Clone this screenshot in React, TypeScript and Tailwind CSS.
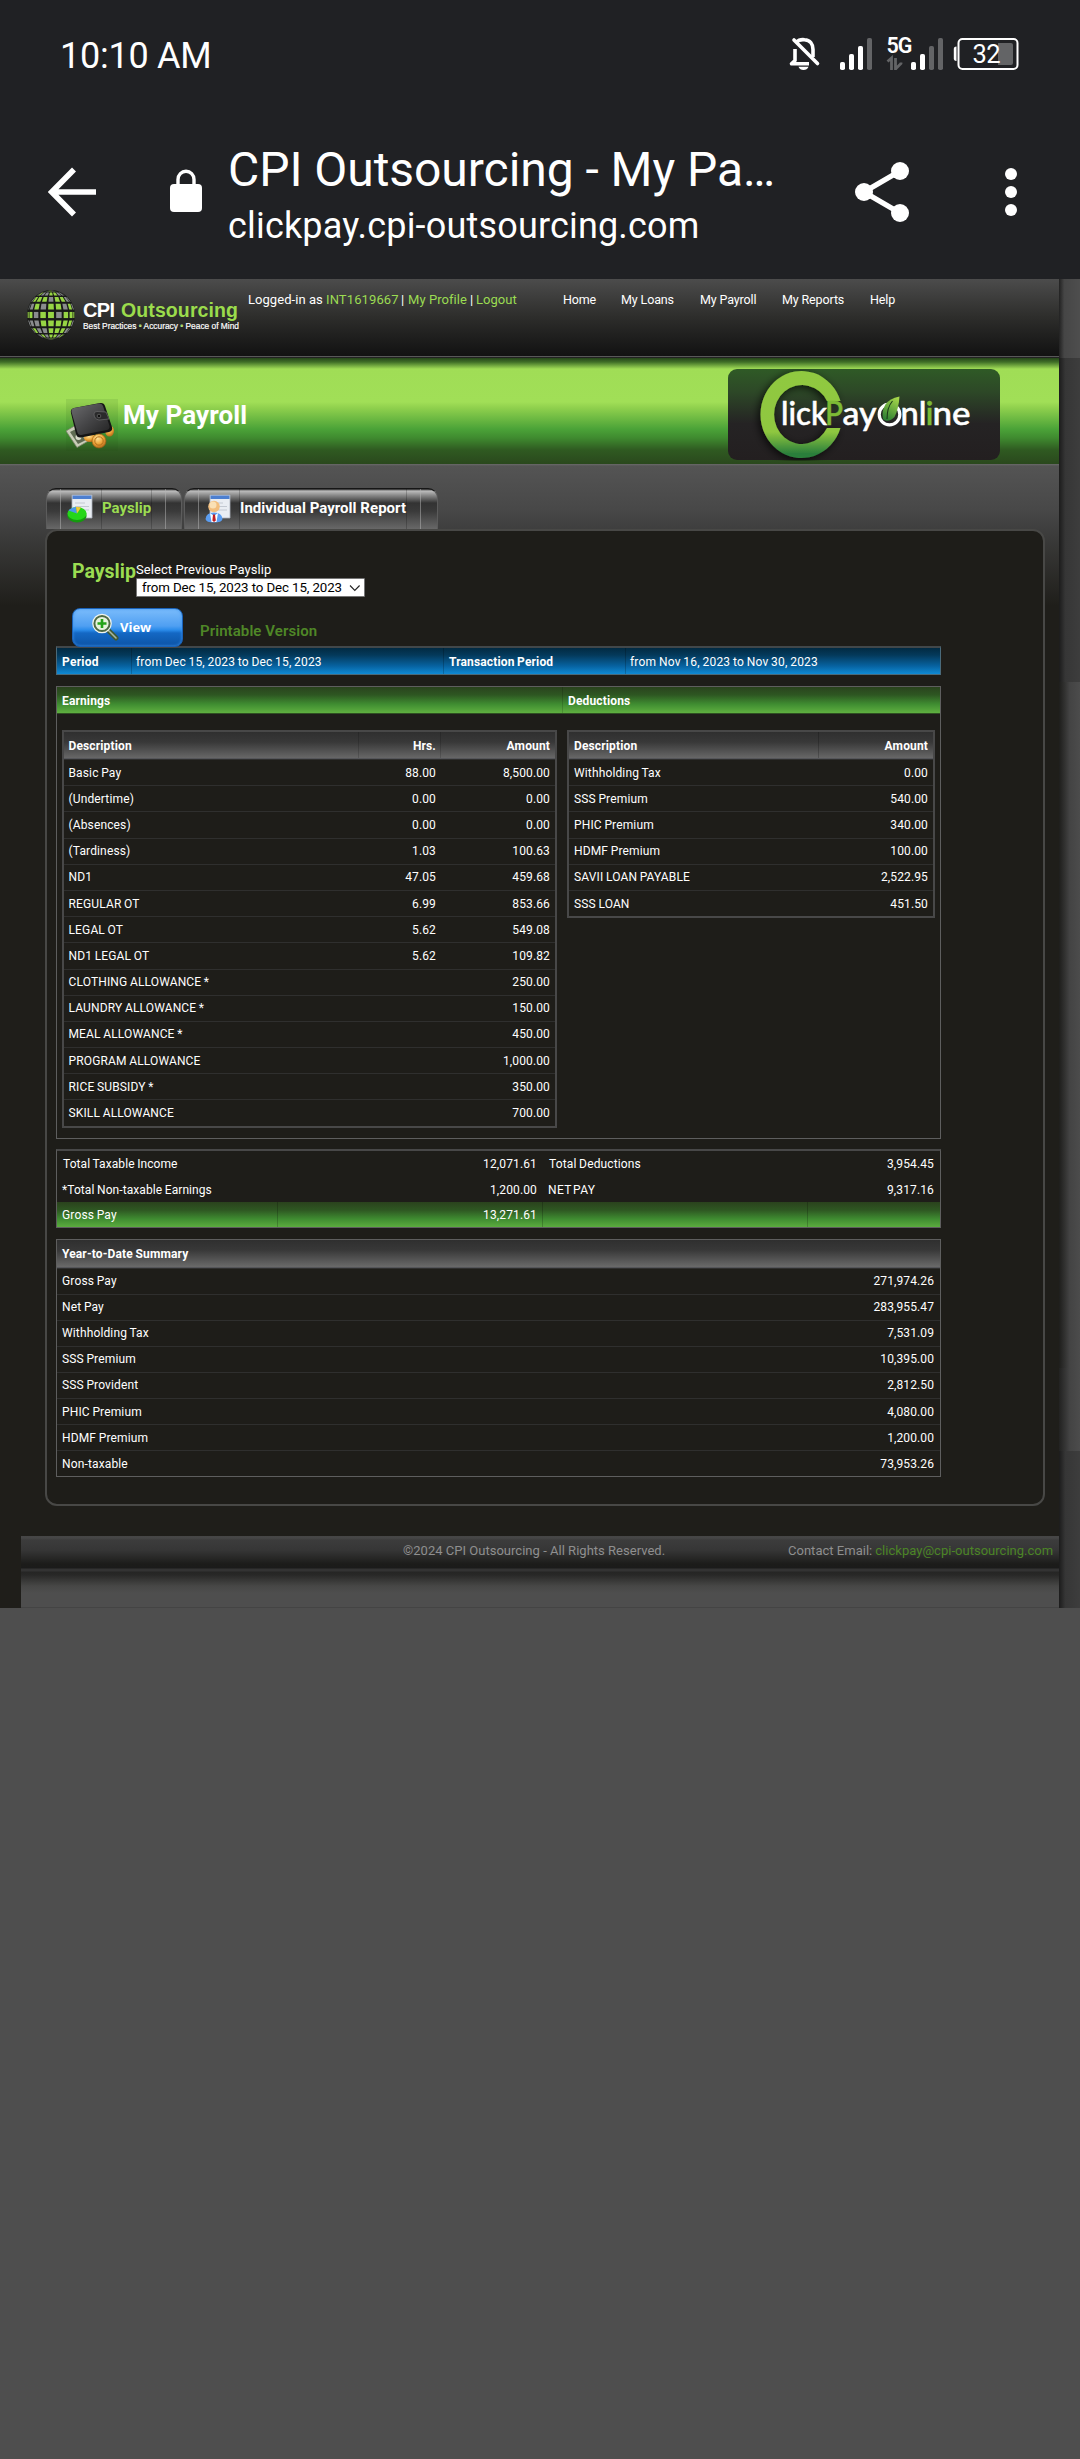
import React from "react";

type Cell = "g" | "w" | "n";

const GLOBE: string[] = [
  "nnwggwwnn",
  "wgwwggwwn",
  "wgggwggww",
  "nwgwggwgw",
  "ggwggwggg",
  "wwwgggggw",
  "wgwwgggww",
  "nwgwggwgn",
  "ngwwggwnn",
];

function Globe() {
  const R = 24.5;
  const cells: React.ReactElement[] = [];
  const n = 9;
  const rad = Math.PI / 180;
  for (let i = 0; i < n; i++) {
    for (let j = 0; j < n; j++) {
      const kind = GLOBE[i][j] as Cell;
      const la0 = (-90 + (180 / n) * i + 2.8) * rad;
      const la1 = (-90 + (180 / n) * (i + 1) - 2.8) * rad;
      const lo0 = (-90 + (180 / n) * j + 2.8) * rad;
      const lo1 = (-90 + (180 / n) * (j + 1) - 2.8) * rad;
      const p = (la: number, lo: number) =>
        `${(25 + R * Math.cos(la) * Math.sin(lo)).toFixed(2)},${(25 + R * Math.sin(la)).toFixed(2)}`;
      cells.push(
        <polygon
          key={`${i}-${j}`}
          points={[p(la0, lo0), p(la0, lo1), p(la1, lo1), p(la1, lo0)].join(" ")}
          fill={kind === "g" ? "#97d544" : kind === "w" ? "#8a8c8e" : "#55585a"}
        />
      );
    }
  }
  return (
    <svg width="48" height="50" viewBox="0 0 50 50" preserveAspectRatio="none">
      <circle cx="25" cy="25" r="25" fill="#191a18" />
      {cells}
    </svg>
  );
}

function StatusBar() {
  return (
    <div className="flex h-[108px] items-center text-white">
      <span className="ml-[60px] w-[728px] pt-[3px] text-[36px] leading-none tracking-[-0.25px]">10:10 AM</span>
      <svg width="232" height="54" viewBox="788 27 232 54" fill="none">
        <path d="M796 42.5C798 40.5 801 39.2 804.5 39.7C810 40 813 44 813 49.5V57M795 49V60.5L791.5 63.8H809" stroke="#fff" strokeWidth="3.6" strokeLinejoin="round" />
        <path d="M794 40L817.5 63.5" stroke="#fff" strokeWidth="3.6" strokeLinecap="round" />
        <path d="M798.5 66.8H808.5C807.5 69 806 70 803.5 70S799.5 69 798.5 66.8Z" fill="#fff" />
        <g fill="#fff">
          <rect x="840" y="62" width="5" height="8" rx="1.8" />
          <rect x="849" y="54" width="5" height="16" rx="1.8" />
          <rect x="858" y="46" width="5" height="24" rx="1.8" />
          <rect x="867" y="38" width="5" height="32" rx="1.8" fill="#636466" />
          <rect x="911" y="62" width="5" height="8" rx="1.8" />
          <rect x="920" y="54" width="5" height="16" rx="1.8" />
          <rect x="929" y="46" width="5" height="24" rx="1.8" fill="#636466" />
          <rect x="938" y="38" width="5" height="32" rx="1.8" fill="#636466" />
        </g>
        <text x="886.5" y="53" fontFamily="Roboto" fontSize="21.5" fontWeight="600" fill="#fff" textLength="26">5G</text>
        <path d="M887.5 61.5L891.5 58V70M895.5 58V70M895.5 69L901 63.5V62.5" stroke="#636466" strokeWidth="2.8" />
        <rect x="958.5" y="39" width="59" height="30" rx="4" stroke="#fff" strokeWidth="2" />
        <path d="M956.5 46.5C954.5 46.5 953.8 47.5 953.8 49V58.5C953.8 60 954.5 61 956.5 61Z" fill="#fff" />
        <path d="M998 43H1011Q1013 43 1013 45V63Q1013 65 1011 65H998Z" fill="#636466" />
        <text x="972.5" y="63" fontFamily="Roboto" fontSize="25.5" fill="#fff" textLength="28">32</text>
      </svg>
    </div>
  );
}

function Toolbar() {
  return (
    <div className="flex h-[171px] text-white">
      <svg className="ml-[48px] mt-[59px]" width="50" height="50" viewBox="0 0 50 50" fill="none" stroke="#fff" strokeWidth="5.6">
        <path d="M48 25H5M26 2.5L3.8 25L26 47.5" />
      </svg>
      <svg className="ml-[72px] mt-[61px]" width="33" height="44" viewBox="0 0 33 44">
        <rect x="0" y="15" width="32" height="28" rx="4" fill="#fff" />
        <path d="M8 17V10.5a8 8.3 0 0 1 16 0V17" fill="none" stroke="#fff" strokeWidth="3.4" />
      </svg>
      <div className="ml-[25px] mt-[33.5px] w-[580px] whitespace-nowrap">
        <div className="text-[48px] leading-[56px] tracking-[-0.05px]">CPI Outsourcing - My Pa…</div>
        <div className="mt-[4px] text-[36px] leading-[48px] tracking-[0.18px]">clickpay.cpi-outsourcing.com</div>
      </div>
      <svg className="ml-[46px] mt-[52px]" width="56" height="64" viewBox="854 160 56 64">
        <path d="M900 171L864 192L900 213" fill="none" stroke="#fff" strokeWidth="5.4" />
        <g fill="#fff">
          <circle cx="900" cy="171" r="9" />
          <circle cx="864" cy="192" r="9" />
          <circle cx="900" cy="213" r="9" />
        </g>
      </svg>
      <svg className="ml-[94px] mt-[58px]" width="14" height="52" viewBox="0 0 14 52" fill="#fff">
        <circle cx="7" cy="8" r="6" />
        <circle cx="7" cy="26" r="6" />
        <circle cx="7" cy="44" r="6" />
      </svg>
    </div>
  );
}

function SiteHeader() {
  return (
    <header className="flex h-[77px] bg-linear-to-b from-[#4c4c4c] via-[#2d2d2b] to-[#121212] text-[12.5px] leading-[20px] text-white">
      <div className="flex w-[248px] pl-[27px] pt-[11px]">
        <Globe />
        <svg className="ml-[5px]" width="162" height="46" viewBox="80 290 162 46" fontFamily="Liberation Sans">
          <text x="83" y="317" fontSize="20" fontWeight="700" fill="#fff" textLength="32">CPI</text>
          <text x="121" y="317" fontSize="19.5" fontWeight="700" fill="#9bdc4c" textLength="117">Outsourcing</text>
          <text x="83" y="328.7" fontSize="9.2" fill="#fff" stroke="#fff" strokeWidth="0.2" textLength="156" lengthAdjust="spacingAndGlyphs">
            Best Practices <tspan fill="#9bdc4c">•</tspan> Accuracy <tspan fill="#9bdc4c">•</tspan> Peace of Mind
          </text>
        </svg>
      </div>
      <div className="flex w-[315px] pt-[10.5px] text-[13px] tracking-[0.05px] whitespace-nowrap">
        <span className="w-[78px]">Logged-in as</span>
        <span className="w-[75px] tracking-[0.12px] text-[#9bdc52]">INT1619667</span>
        <span className="w-[7px]">|</span>
        <span className="w-[62px] text-[#9bdc52]">My Profile</span>
        <span className="w-[6px]">|</span>
        <span className="text-[#9bdc52]">Logout</span>
      </div>
      <nav className="flex pt-[10.5px] tracking-[-0.13px] whitespace-nowrap">
        <span className="w-[58px]">Home</span>
        <span className="w-[79px]">My Loans</span>
        <span className="w-[82px]">My Payroll</span>
        <span className="w-[88px]">My Reports</span>
        <span>Help</span>
      </nav>
    </header>
  );
}

function Wallet() {
  return (
    <svg width="53" height="52" viewBox="0 0 53 52">
      <defs>
        <linearGradient id="wl" x1="0" y1="0" x2="1" y2="1">
          <stop offset="0" stopColor="#6c6c6e" />
          <stop offset="0.5" stopColor="#464648" />
          <stop offset="1" stopColor="#222" />
        </linearGradient>
        <radialGradient id="coin" cx="0.4" cy="0.3" r="0.8">
          <stop offset="0" stopColor="#ffe49a" />
          <stop offset="0.5" stopColor="#eda53a" />
          <stop offset="1" stopColor="#a85c12" />
        </radialGradient>
      </defs>
      <rect width="52" height="52" fill="#1d4a16" opacity="0.1" />
      <path d="M0 32L10 26L24 41L11 48.5Z" fill="#c9cdb8" stroke="#7c826c" strokeWidth="0.8" />
      <path d="M4 33L10 30L20 41L12 45Z" fill="#5f6b52" />
      <circle cx="12.5" cy="38" r="3" fill="#d6d9c8" />
      <ellipse cx="24" cy="39" rx="6" ry="4" fill="url(#coin)" />
      <ellipse cx="43.5" cy="32" rx="4.5" ry="5.5" fill="url(#coin)" />
      <path d="M5 14Q4 10 8 9L34 4Q38 3.5 39 7L46 28Q47 32 43 33L15 38.5Q11 39 10 35Z" fill="#151515" />
      <path d="M5.5 13Q5 10 8 9L33 4.5Q36 4 37 7L43.5 27Q44 30 41 31L15 36Q12 36 11.3 33Z" fill="url(#wl)" />
      <path d="M28 15Q28 12.5 31 12.5L40 13L43 20L33 21Q28 20 28 15Z" fill="#2a2a2b" stroke="#6b6b6d" strokeWidth="0.7" />
      <circle cx="33" cy="17" r="1.8" fill="#111" stroke="#8c8c8c" strokeWidth="0.5" />
      <circle cx="33" cy="42" r="7" fill="url(#coin)" stroke="#9c5a14" strokeWidth="0.6" />
      <circle cx="33" cy="42" r="4.2" fill="none" stroke="#b46f1c" strokeWidth="1" />
    </svg>
  );
}

function ClickPayLogo() {
  return (
    <svg width="273" height="92" viewBox="728 369 273 92" fontFamily="Lato" fontSize="33" fontWeight="500">
      <defs>
        <linearGradient id="cbg" x1="0" y1="0" x2="0" y2="1">
          <stop offset="0" stopColor="#2f5a26" />
          <stop offset="0.25" stopColor="#2d4827" />
          <stop offset="0.6" stopColor="#252324" />
          <stop offset="1" stopColor="#231f20" />
        </linearGradient>
        <linearGradient id="cring" x1="0" y1="0" x2="0" y2="1">
          <stop offset="0" stopColor="#90c93f" />
          <stop offset="0.7" stopColor="#8fc73f" />
          <stop offset="0.95" stopColor="#2b7f3b" />
        </linearGradient>
        <linearGradient id="leaf" x1="0.7" y1="0" x2="0.3" y2="1">
          <stop offset="0" stopColor="#a5d64a" />
          <stop offset="1" stopColor="#2d7f33" />
        </linearGradient>
        <filter id="csh" x="-30%" y="-30%" width="160%" height="160%">
          <feDropShadow dx="-2" dy="2" stdDeviation="4" floodColor="#000" floodOpacity="0.75" />
        </filter>
      </defs>
      <rect x="728" y="369" width="272" height="91" rx="9" fill="url(#cbg)" />
      <g filter="url(#csh)">
        <path d="M840.5 401A41 43.5 0 1 0 840.5 428H827A28 29.5 0 1 1 827 401Z" fill="url(#cring)" />
      </g>
      <g fill="#fff" stroke="#fff" strokeWidth="0.5">
        <text x="781" y="425" textLength="46" lengthAdjust="spacingAndGlyphs">lick</text>
        <text x="842.5" y="425" textLength="34" lengthAdjust="spacingAndGlyphs">ay</text>
        <text x="900.5" y="425" textLength="26" lengthAdjust="spacingAndGlyphs">nl</text>
        <text x="932.5" y="425" textLength="38" lengthAdjust="spacingAndGlyphs">ne</text>
      </g>
      <g fill="#7dbb35" stroke="#7dbb35" strokeWidth="0.5">
        <text x="825" y="425" textLength="18" lengthAdjust="spacingAndGlyphs">P</text>
        <text x="925.5" y="425">i</text>
      </g>
      <circle cx="889.5" cy="414.5" r="10.3" fill="none" stroke="#fff" strokeWidth="3.2" />
      <path d="M883 419C881 408 886 399 899.5 396.5C899 405 897 412 894.5 417C891 421 886 422 883 419Z" fill="url(#leaf)" />
      <path d="M887 419C887 411 889 405 892.5 401" stroke="#1a3a18" strokeWidth="1.1" fill="none" />
    </svg>
  );
}

function Banner() {
  return (
    <div className="flex h-[106px] bg-[linear-gradient(to_bottom,#25441a_0px,#3f6e27_4px,#a0dd56_11px,#a1df57_44px,#8fd04d_50px,#4ba338_71px,#3f8a2f_80px,#2f5a21_92px,#2a481d_106px)]">
      <div className="ml-[66px] mt-[41px] w-[57px]"><Wallet /></div>
      <h1 className="mt-[41px] w-[605px] text-[26px] leading-[32px] font-bold tracking-[0.08px] text-white">My Payroll</h1>
      <div className="mt-[11px]"><ClickPayLogo /></div>
    </div>
  );
}

function PageSheet() {
  return (
    <>
      <path d="M5 1H25V24H5Z" fill="#e9edf3" stroke="#a9b0ba" strokeWidth="0.8" />
      <path d="M5.5 1.5H24.5V5H5.5Z" fill="#4d7fd0" />
      <path d="M8 9H18M8 12.5H22M8 16H22" stroke="#c3c9d2" strokeWidth="1" />
    </>
  );
}

function PieIcon() {
  return (
    <svg width="27" height="29" viewBox="0 0 27 29">
      <PageSheet />
      <ellipse cx="10" cy="22" rx="9.6" ry="6.5" fill="#149a0e" />
      <ellipse cx="10" cy="19.5" rx="9.6" ry="6.5" fill="#25d61a" />
      <path d="M10 19.5L1.5 16.5Q4 13.5 9 13Z" fill="#4b96ec" />
      <path d="M10 19.5L9 13Q12 12.8 14 13.5Z" fill="#f3c63a" />
    </svg>
  );
}

function PersonIcon() {
  return (
    <svg width="27" height="29" viewBox="0 0 27 29">
      <PageSheet />
      <path d="M0.5 25Q1 18.5 9 18.5T17.5 25Q17 28.5 9 28.5T0.5 25Z" fill="#5b9df0" />
      <path d="M5 19L9 22L13 19L11.5 28H6.5Z" fill="#fff" />
      <path d="M8 20.5H10L10.8 26.5L9 28L7.4 26.5Z" fill="#c01e22" />
      <circle cx="9" cy="12.5" r="5.8" fill="#f2bd7c" />
      <circle cx="8" cy="11" r="3.5" fill="#fae0b5" />
    </svg>
  );
}

const tabShape =
  "flex h-[41px] rounded-t-[10px] border-x border-t border-[#5c5c5c] border-t-[#161616] bg-[linear-gradient(to_bottom,#1a1a1a_0px,#bdbdbd_2px,#8d8d8d_6px,#333_14px,#3a3a3a_22px,#686868_40px)]";

function Tabs() {
  return (
    <div className="flex pl-[46px] pt-[24px]">
      <div className={`${tabShape} w-[136px]`}>
        <div className="ml-[13px] w-[41px] border-l border-[#b5b5b5]/50 pl-[6px] pt-[5px]"><PieIcon /></div>
        <div className="flex w-[51px] border-x border-black/20 text-[15px] leading-[39px] font-bold text-[#9bdc52]">Payslip</div>
        <div className="w-[14px] border-r border-[#b5b5b5]/50" />
      </div>
      <div className={`${tabShape} ml-[2px] w-[254px]`}>
        <div className="ml-[13px] w-[41px] border-l border-[#b5b5b5]/50 pl-[6px] pt-[5px]"><PersonIcon /></div>
        <div className="flex w-[168px] border-x border-black/20 text-[15px] leading-[39px] font-bold tracking-[0.03px] whitespace-nowrap text-white">Individual Payroll Report</div>
        <div className="w-[14px] border-r border-[#b5b5b5]/50" />
      </div>
    </div>
  );
}

function Controls() {
  return (
    <div className="h-[115px] pl-[25px] pt-[30px]">
      <div className="flex">
        <h2 className="w-[64px] text-[19.5px] leading-[22px] font-bold text-[#9bdc52]">Payslip</h2>
        <div>
          <div className="h-[17px] text-[13px] leading-[18px] tracking-[0.07px] whitespace-nowrap text-white">Select Previous Payslip</div>
          <div className="flex h-[19px] w-[229px] items-center rounded-[1px] border border-[#767676] bg-white pl-[5px] text-[13.3px] leading-[17px] text-black">
            <span className="w-[207px] tracking-[-0.11px] whitespace-nowrap">from Dec 15, 2023 to Dec 15, 2023</span>
            <svg width="12" height="8" viewBox="0 0 12 8" fill="none" stroke="#222" strokeWidth="1.1"><path d="M1 1.5L5.8 6.5L10.6 1.5" /></svg>
          </div>
        </div>
      </div>
      <div className="mt-[11px] flex">
        <div className="flex h-[39px] w-[111px] rounded-[8px] border border-[#1a62b8] bg-[linear-gradient(to_bottom,#7bbcfb_0px,#4f9ff2_17px,#2a8bea_21px,#1468c4_24px,#0d55a8_36px)] pl-[19px] shadow-[inset_0_0_3px_#3d94ee]">
          <svg className="mt-[4px]" width="27" height="28" viewBox="0 0 27 28">
            <path d="M15 16L24 25" stroke="#3f5a38" strokeWidth="5" strokeLinecap="round" />
            <path d="M17 18L24 25" stroke="#a9b7a0" strokeWidth="1.6" strokeLinecap="round" />
            <circle cx="10" cy="10.5" r="8.3" fill="#dff2d2" stroke="#f2f5ee" strokeWidth="3" />
            <circle cx="10" cy="10.5" r="7.6" fill="#e6f3dc" stroke="#4f6a45" strokeWidth="2" />
            <path d="M10 6V15M5.5 10.5H14.5" stroke="#24a318" strokeWidth="2.6" />
          </svg>
          <span className="ml-[1px] font-['Open_Sans'] text-[13px] leading-[36px] font-bold text-white">View</span>
        </div>
        <div className="ml-[17px] mt-[12.5px] text-[15px] leading-[20px] font-semibold tracking-[0.08px] text-[#4f8727]">Printable Version</div>
      </div>
    </div>
  );
}

type Line = { d: string; h?: string; a: string };

const earnings: Line[] = [
  { d: "Basic Pay", h: "88.00", a: "8,500.00" },
  { d: "(Undertime)", h: "0.00", a: "0.00" },
  { d: "(Absences)", h: "0.00", a: "0.00" },
  { d: "(Tardiness)", h: "1.03", a: "100.63" },
  { d: "ND1", h: "47.05", a: "459.68" },
  { d: "REGULAR OT", h: "6.99", a: "853.66" },
  { d: "LEGAL OT", h: "5.62", a: "549.08" },
  { d: "ND1 LEGAL OT", h: "5.62", a: "109.82" },
  { d: "CLOTHING ALLOWANCE *", a: "250.00" },
  { d: "LAUNDRY ALLOWANCE *", a: "150.00" },
  { d: "MEAL ALLOWANCE *", a: "450.00" },
  { d: "PROGRAM ALLOWANCE", a: "1,000.00" },
  { d: "RICE SUBSIDY *", a: "350.00" },
  { d: "SKILL ALLOWANCE", a: "700.00" },
];

const deductions: Line[] = [
  { d: "Withholding Tax", a: "0.00" },
  { d: "SSS Premium", a: "540.00" },
  { d: "PHIC Premium", a: "340.00" },
  { d: "HDMF Premium", a: "100.00" },
  { d: "SAVII LOAN PAYABLE", a: "2,522.95" },
  { d: "SSS LOAN", a: "451.50" },
];

const ytd: Line[] = [
  { d: "Gross Pay", a: "271,974.26" },
  { d: "Net Pay", a: "283,955.47" },
  { d: "Withholding Tax", a: "7,531.09" },
  { d: "SSS Premium", a: "10,395.00" },
  { d: "SSS Provident", a: "2,812.50" },
  { d: "PHIC Premium", a: "4,080.00" },
  { d: "HDMF Premium", a: "1,200.00" },
  { d: "Non-taxable", a: "73,953.26" },
];

const greyHead =
  "flex border-b border-[#55565a] bg-[linear-gradient(to_bottom,#2f2f2f_0px,#383838_10px,#6a6a6a_27px)] font-bold";
const greenBar = "bg-[linear-gradient(to_bottom,#2a421d_0px,#2e5722_8px,#3f8c31_17px,#5fb040_26px)]";

function EarningsTable() {
  return (
    <div className="w-[495px] border-2 border-[#484848]">
      <div className={`${greyHead} h-[27px] leading-[28px]`}>
        <div className="w-[294px] pl-[4.5px]">Description</div>
        <div className="w-[82px] border-l border-black/15 pr-[4px] text-right">Hrs.</div>
        <div className="grow border-l border-black/15 pr-[5px] text-right">Amount</div>
      </div>
      {earnings.map((r, i) => (
        <div key={i} className="flex h-[26.2px] items-center border-t border-[#2f2f2e] first:border-t-0">
          <div className="w-[294px] pl-[4.5px]">{r.d}</div>
          <div className="w-[82px] pr-[4px] text-right">{r.h}</div>
          <div className="grow pr-[5px] text-right">{r.a}</div>
        </div>
      ))}
    </div>
  );
}

function DeductionsTable() {
  return (
    <div className="w-[368px] border-2 border-[#484848]">
      <div className={`${greyHead} h-[27px] leading-[28px]`}>
        <div className="w-[249px] pl-[5px]">Description</div>
        <div className="grow border-l border-black/20 pr-[5px] text-right">Amount</div>
      </div>
      {deductions.map((r, i) => (
        <div key={i} className="flex h-[26.2px] items-center justify-between border-t border-[#2f2f2e] pl-[5px] pr-[5px]">
          <span>{r.d}</span>
          <span>{r.a}</span>
        </div>
      ))}
    </div>
  );
}

function PayslipBody() {
  return (
    <div className="ml-[9px] w-[885px] text-[12px] leading-[18px] tracking-[0.14px] whitespace-nowrap text-white [word-spacing:-0.5px]">
      <div className="flex h-[29px] border border-t-2 border-[#4a6a7a] border-t-[#41474a] bg-[linear-gradient(to_bottom,#022a42_0px,#04395a_7px,#0762a0_18px,#0f8ad4_26px)] leading-[28px]">
        <div className="w-[74px] pl-[5px] font-bold tracking-[0.25px]">Period</div>
        <div className="w-[312px] border-l border-black/20 pl-[4px] tracking-[0.17px]">from Dec 15, 2023 to Dec 15, 2023</div>
        <div className="w-[182px] border-l border-black/20 pl-[5px] font-bold">Transaction Period</div>
        <div className="border-l border-black/20 pl-[4px] tracking-[0.2px]">from Nov 16, 2023 to Nov 30, 2023</div>
      </div>

      <div className="mt-[11px] h-[452.5px] border border-[#5e5e5e]">
        <div className={`${greenBar} flex h-[27px] border-b border-[#2f4f22] leading-[28px] font-bold`}>
          <div className="w-[505px] pl-[5px]">Earnings</div>
          <div className="border-l border-black/15 pl-[5px]">Deductions</div>
        </div>
        <div className="flex items-start gap-[10px] pl-[5px] pt-[16px]">
          <EarningsTable />
          <DeductionsTable />
        </div>
      </div>

      <div className="mt-[10.5px] h-[79px] border border-t-2 border-[#5e5e5e] border-t-[#484848]">
        <div className="flex h-[26px] items-center">
          <div className="flex w-[480px] justify-between pl-[6px]"><span className="tracking-[0.08px]">Total Taxable Income</span><span>12,071.61</span></div>
          <div className="flex grow justify-between pl-[12px] pr-[6px]"><span>Total Deductions</span><span>3,954.45</span></div>
        </div>
        <div className="flex h-[25px] items-center">
          <div className="flex w-[480px] justify-between pl-[5px]"><span className="tracking-[0.08px]">*Total Non-taxable Earnings</span><span>1,200.00</span></div>
          <div className="flex grow justify-between pl-[11px] pr-[6px]"><span className="[word-spacing:-2px] tracking-[0.4px]">NET PAY</span><span>9,317.16</span></div>
        </div>
        <div className={`${greenBar} flex h-[25px] leading-[26px]`}>
          <div className="w-[220px] pl-[5px]">Gross Pay</div>
          <div className="w-[265px] border-l border-black/20 pr-[5px] text-right">13,271.61</div>
          <div className="w-[265px] border-l border-black/20" />
          <div className="grow border-l border-black/20" />
        </div>
      </div>

      <div className="mt-[11px] border border-[#5e5e5e]">
        <div className={`${greyHead} h-[27.5px] pl-[5px] leading-[29px]`}>Year-to-Date Summary</div>
        {ytd.map((r, i) => (
          <div key={i} className="flex h-[26.1px] items-center justify-between border-t border-[#2f2f2e] pl-[5px] pr-[6px]">
            <span>{r.d}</span>
            <span className="tracking-[0.1px]">{r.a}</span>
          </div>
        ))}
      </div>
    </div>
  );
}

function Footer() {
  return (
    <footer className="ml-[21px] h-[72px] bg-[linear-gradient(to_bottom,#454545_0px,#464646_2px,#3c3c3c_4px,#363636_14px,#1c1c1a_28px,#1b1b1a_32px,#333_33px,#333_35px,#252524_36px,#282827_39px,#474746_50px,#4e4e4e_57px,#4e4e4e_71px,#444_71px,#444_72px)]">
      <div className="flex text-[13px] leading-[30px] tracking-[0.02px] whitespace-nowrap text-[#8f8f8f]">
        <span className="w-[767px] pl-[382px]">©2024 CPI Outsourcing - All Rights Reserved.</span>
        <span>Contact Email:</span>
        <span className="ml-[3px] text-[#4c8526]">clickpay@cpi-outsourcing.com</span>
      </div>
    </footer>
  );
}

export default function App() {
  return (
    <div className="min-h-[2459px] w-[1080px] bg-[#4e4e4e] font-[Roboto,sans-serif]">
      <div className="bg-[#202124]">
        <StatusBar />
        <Toolbar />
      </div>
      <div className="flex h-[1329px]">
        <main className="w-[1059px] bg-[#1f1e1a]">
          <SiteHeader />
          <div className="h-[2px] border-t border-[#585858] bg-[#222]" />
          <Banner />
          <div className="h-[1072px] bg-[linear-gradient(to_bottom,#6a6a6a_0px,#545454_2px,#484848_45px,#3a3a39_75px,#1f1e1a_142px)]">
            <Tabs />
            <div className="ml-[45px] h-[977px] w-[1000px] rounded-[12px] border-2 border-[#484846] bg-[#1e1d19]">
              <Controls />
              <PayslipBody />
            </div>
          </div>
          <Footer />
        </main>
        <aside className="flex w-[21px] flex-col">
          <div className="h-[79px] bg-linear-to-r from-[#222] via-[#464646] via-25% to-[#4e4e4e]" />
          <div className="h-[324px] bg-linear-to-r from-[#1c1c1c] via-[#363636] via-30% to-[#3d3d3d]" />
          <div className="h-[686px] bg-linear-to-r from-[#1e1e1c] via-[#434343] via-50% to-[#4c4c4c]" />
          <div className="h-[83px] bg-linear-to-r from-[#222221] via-[#434343] via-50% to-[#4c4c4c]" />
          <div className="grow bg-linear-to-r from-[#1c1c1c] via-[#363636] via-30% to-[#3d3d3d]" />
        </aside>
      </div>
    </div>
  );
}
